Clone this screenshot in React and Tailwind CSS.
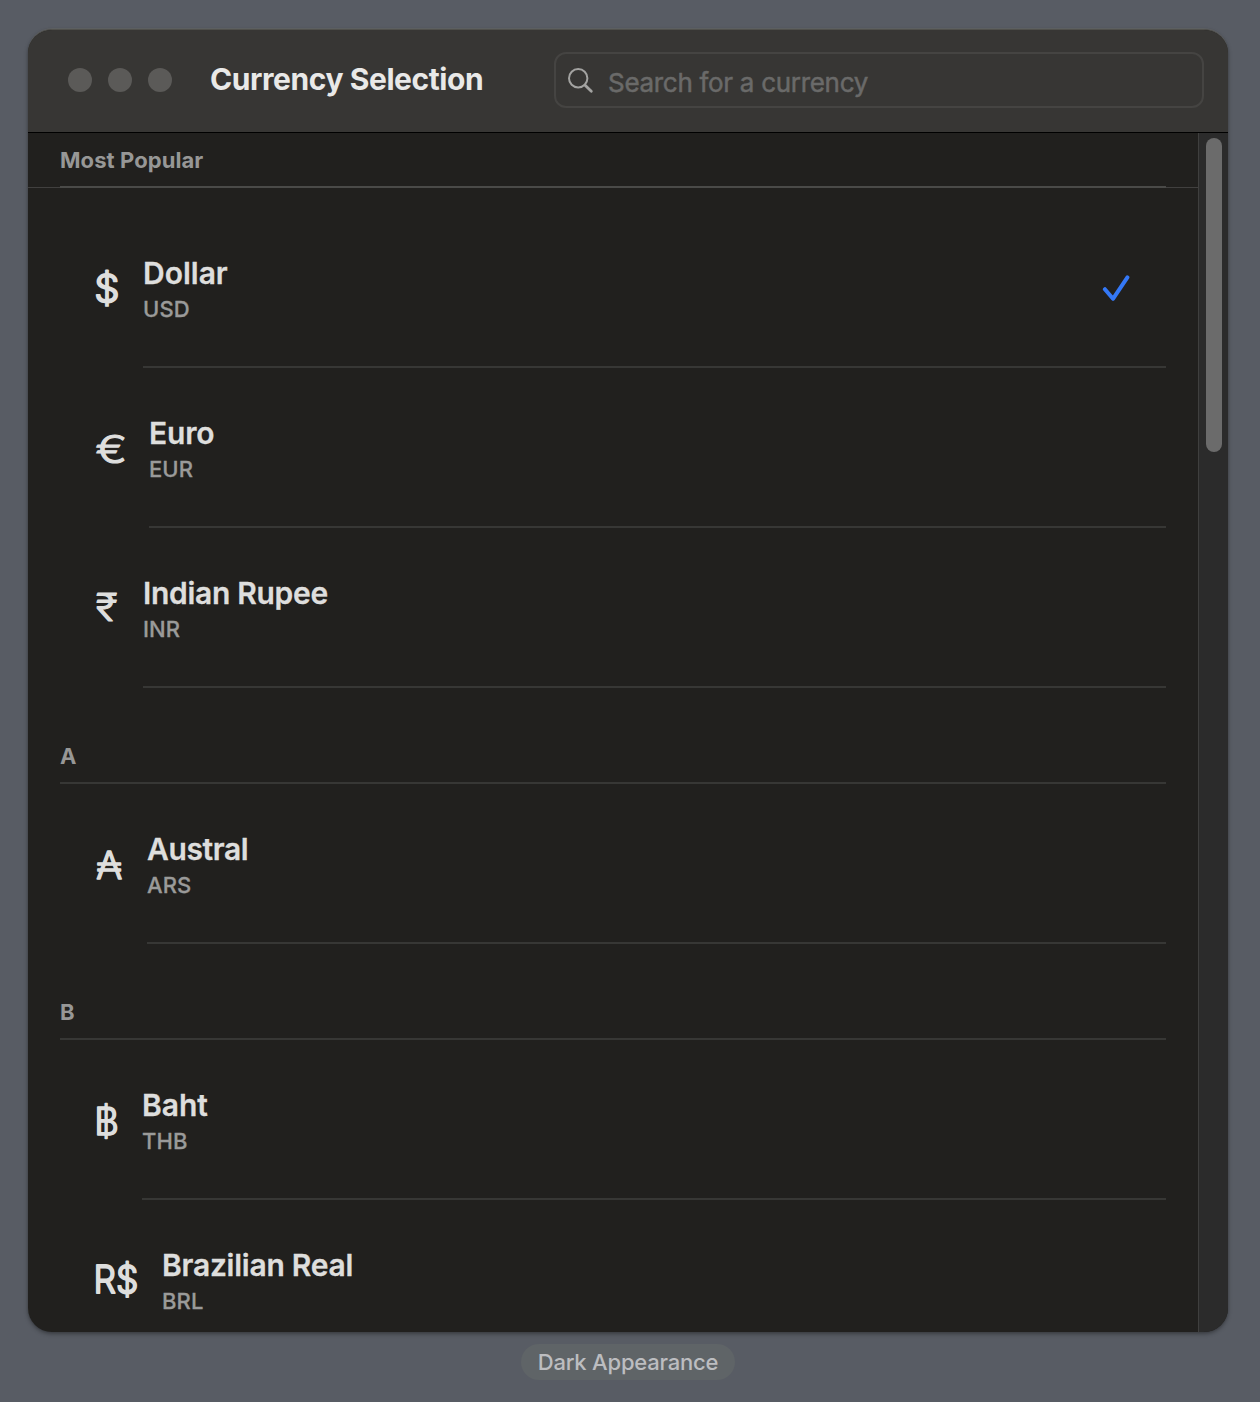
import React from "react";

function Symbol({ children, x = 0, y = 94, scale = 1, weight = 300, stroke = 1.7 }) {
  return (
    <svg className="h-40 w-full overflow-visible" fill="#dededd" stroke="#dededd">
      <text
        transform={`translate(${x} ${y}) scale(${scale} 1)`}
        fontSize="38.5"
        fontWeight={weight}
        strokeWidth={stroke}
        strokeLinejoin="round"
      >
        {children}
      </text>
    </svg>
  );
}

function Check() {
  return (
    <svg className="mr-9 h-[28px] w-[28px] shrink-0" viewBox="0 0 28 28" fill="none">
      <path
        d="M2.9 16.2 L11 25.8 L25.4 4.4"
        stroke="#3478f6"
        strokeWidth="4"
        strokeLinecap="round"
        strokeLinejoin="round"
      />
    </svg>
  );
}

function Row({ symbol, symbolClass, name, nameClass = "tracking-[-0.2px]", code, first, checked, last }) {
  return (
    <div className={"flex pl-[66px] pr-8 " + (first ? "pt-5" : "")}>
      <div className={"h-40 shrink-0 " + symbolClass}>{symbol}</div>
      <div
        className={
          "flex h-40 min-w-0 flex-1 items-center justify-between " +
          (last ? "" : "border-b-2 border-[#373735]")
        }
      >
        <div className="h-full pt-[47px]">
          <div className={"h-9 whitespace-nowrap text-[30px] font-semibold leading-9 text-[#dededd] [-webkit-text-stroke:0.3px_#dededd] " + nameClass}>
            {name}
          </div>
          <div className="h-9 whitespace-nowrap text-[22px] font-medium leading-9 tracking-[0.1px] text-[#9a9a99] [-webkit-text-stroke:0.3px_#9a9a99]">
            {code}
          </div>
        </div>
        {checked && <Check />}
      </div>
    </div>
  );
}

function SectionHeader({ children }) {
  return (
    <div className="ml-8 mr-8 h-24 border-b-2 border-[#373735] pt-[50px]">
      <div className="h-9 text-[22px] font-bold leading-9 text-[#979796]">{children}</div>
    </div>
  );
}

export default function App() {
  return (
    <div className="flex h-[1402px] w-[1260px] flex-col items-start overflow-hidden bg-[#585c64] pl-7 pt-[29px] font-['Inter',sans-serif]">
      <div className="h-[1303px] w-[1200px] shrink-0 overflow-hidden rounded-[24px] border-t border-[#50504c] bg-[#21201e] shadow-[0_-1px_0_rgba(110,110,104,0.4),0_2px_4px_rgba(0,0,0,0.35),0_0_2px_rgba(0,0,0,0.12)]">
        <div className="flex h-[103px] items-start border-b border-black bg-[#373634] pl-10 pr-6">
          <div className="mt-[38px] flex gap-4">
            <div className="h-6 w-6 rounded-full bg-[#5b5a58]" />
            <div className="h-6 w-6 rounded-full bg-[#5b5a58]" />
            <div className="h-6 w-6 rounded-full bg-[#5b5a58]" />
          </div>
          <div className="ml-[38px] mt-[31px] w-[344px] whitespace-nowrap text-[30px] font-bold leading-9 tracking-[-0.43px] text-[#e9e9e8]">
            Currency Selection
          </div>
          <div className="mt-[22px] flex h-14 w-[650px] items-center rounded-[12px] border-2 border-[#454442] pl-[11px]">
            <svg className="h-[28px] w-[28px]" viewBox="0 0 28 28" fill="none" stroke="#a3a3a1" strokeLinecap="round">
              <circle cx="11.2" cy="12.2" r="9.2" strokeWidth="2" />
              <path d="M18.1 19.2 L24.3 25.3" strokeWidth="2.8" />
            </svg>
            <div className="ml-[13px] mt-[6px] whitespace-nowrap text-[26px] leading-8 tracking-[-0.3px] text-[#6a6a69] [-webkit-text-stroke:0.5px_#6a6a69]">
              Search for a currency
            </div>
          </div>
        </div>
        <div className="flex h-[1199px]">
          <div className="w-[1170px] overflow-hidden">
            <div className="h-[55px] bg-[linear-gradient(#41403f,#41403f)] bg-[length:100%_1px] bg-bottom bg-no-repeat px-8">
              <div className="h-full border-b-2 border-[#4a4a48] pt-[9px] text-[22px] font-bold leading-9 tracking-[0.08px] text-[#979796]">
                Most Popular
              </div>
            </div>
            <Row first checked symbol={<Symbol scale={1.04} x={0.2} y={93.5} stroke={1.9}>$</Symbol>} symbolClass="w-[49px]" name="Dollar" nameClass="" code="USD" />
            <Row symbol={<Symbol scale={1.22} x={1.5} y={94.5} stroke={1.2}>€</Symbol>} symbolClass="w-[55px]" name="Euro" code="EUR" />
            <Row symbol={<Symbol scale={1.07} x={2.1} y={93} stroke={1.2}>₹</Symbol>} symbolClass="w-[49px]" name="Indian Rupee" nameClass="tracking-[-0.3px]" code="INR" />
            <SectionHeader>A</SectionHeader>
            <Row symbol={<Symbol scale={1.02} x={2} y={95} stroke={1.3}>₳</Symbol>} symbolClass="w-[53px]" name="Austral" nameClass="tracking-[-0.4px]" code="ARS" />
            <SectionHeader>B</SectionHeader>
            <Row symbol={<Symbol scale={1} y={94.5} stroke={1.5}>฿</Symbol>} symbolClass="w-[48px]" name="Baht" nameClass="" code="THB" />
            <Row last symbol={<Symbol scale={0.92} x={-0.5} y={93} stroke={2}>R$</Symbol>} symbolClass="w-[68px]" name="Brazilian Real" nameClass="tracking-[-0.25px]" code="BRL" />
          </div>
          <div className="flex w-[30px] justify-center border-l border-[#3f3f3e] bg-[#2b2b2b] pl-px pt-[5px]">
            <div className="h-[314px] w-4 rounded-full bg-[#6b6b6b]" />
          </div>
        </div>
      </div>
      <div className="ml-[493px] mt-3 flex h-9 w-[214px] items-center justify-center rounded-full bg-[#5f6467] text-[22px] font-medium tracking-[-0.2px] text-[#bcbdc0]">
        Dark Appearance
      </div>
    </div>
  );
}
